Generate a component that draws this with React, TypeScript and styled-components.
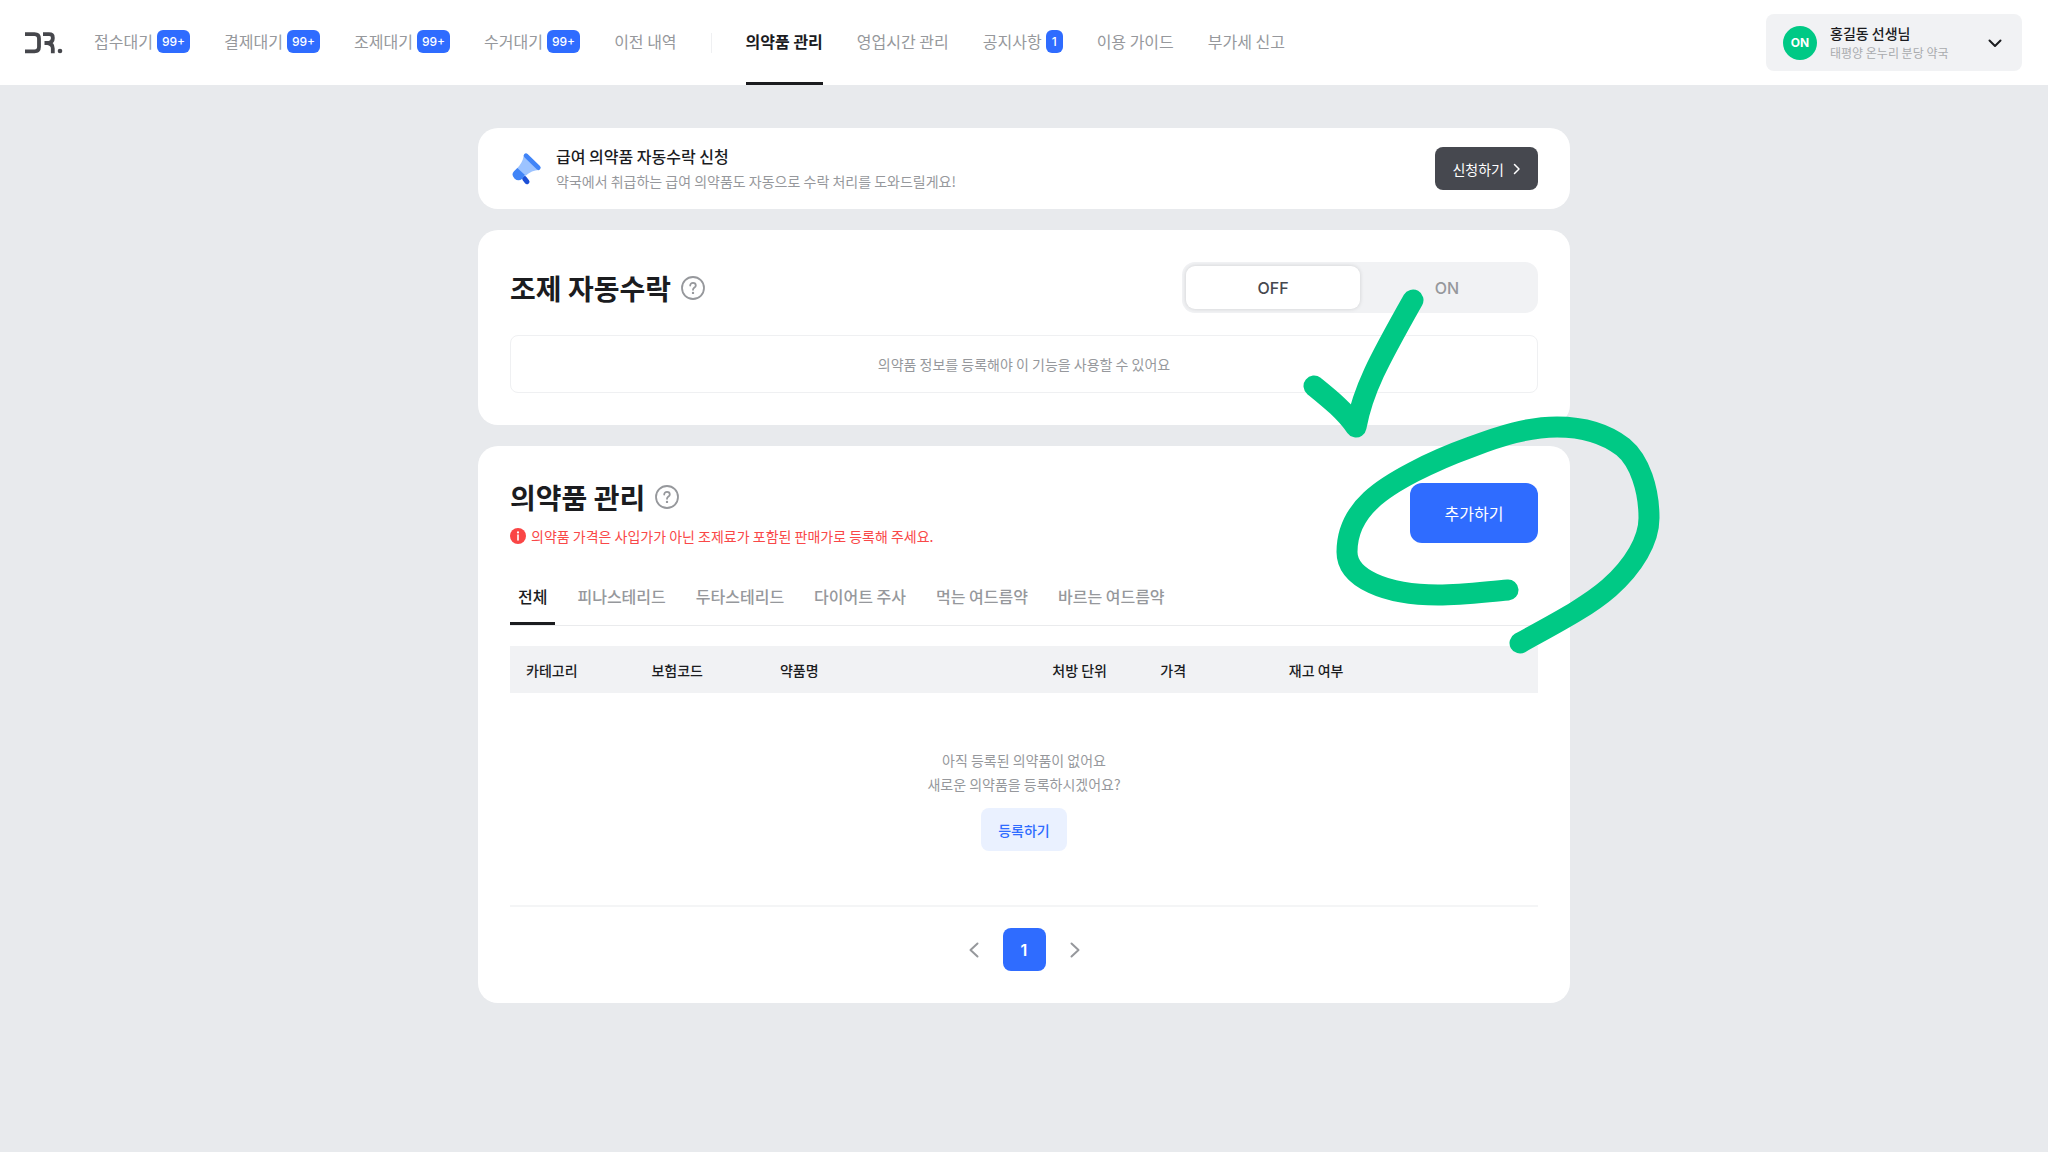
import React, { useState } from "react";
import styled, { createGlobalStyle } from "styled-components";

const latin = `Inter, "Noto Sans CJK KR", sans-serif`;

const GlobalStyle = createGlobalStyle`
  *, *::before, *::after { box-sizing: border-box; }
  body {
    margin: 0;
    background: #e8eaed;
    color: #1b1c1f;
    font-family: "Noto Sans CJK KR", sans-serif;
    font-size: 14px;
    line-height: 24px;
  }
  button { font: inherit; color: inherit; border: 0; padding: 0; background: none; cursor: pointer; }
  h1, h2, p { margin: 0; }
`;

const Header = styled.header`
  display: flex;
  align-items: center;
  height: 85px;
  padding: 0 26px 0 25px;
  background: #ffffff;
`;

const Logo = styled.a`
  display: flex;
  margin-right: 31px;
`;

const Nav = styled.nav`
  display: flex;
  align-items: stretch;
  gap: 34px;
  height: 100%;
`;

const NavLink = styled.a<{ $active?: boolean }>`
  display: flex;
  align-items: center;
  gap: 4px;
  border-bottom: 3px solid ${(p) => (p.$active ? "#1b1c1f" : "transparent")};
  color: ${(p) => (p.$active ? "#1b1c1f" : "#96989c")};
  font-size: 16px;
  font-weight: ${(p) => (p.$active ? 700 : 400)};
  text-decoration: none;
  white-space: nowrap;
`;

const Badge = styled.span`
  min-width: 17px;
  padding: 0 5px;
  border-radius: 6px;
  background: #2f6cff;
  color: #ffffff;
  font-family: ${latin};
  font-size: 12px;
  font-weight: 500;
  line-height: 23px;
  text-align: center;
`;

const NavDivider = styled.span`
  align-self: center;
  width: 1px;
  height: 20px;
  background: #eff0f2;
`;

const UserMenu = styled.button`
  display: flex;
  align-items: center;
  gap: 13px;
  width: 256px;
  height: 57px;
  margin-left: auto;
  padding: 0 17px;
  border-radius: 8px;
  background: #f1f2f4;
  text-align: left;
`;

const Status = styled.span`
  display: grid;
  place-items: center;
  width: 34px;
  height: 34px;
  border-radius: 50%;
  background: #00c985;
  color: #ffffff;
  font-family: ${latin};
  font-size: 12px;
  font-weight: 700;
`;

const UserText = styled.span`
  display: flex;
  flex: 1;
  flex-direction: column;
`;

const UserName = styled.span`
  font-weight: 500;
  line-height: 20px;
`;

const UserPlace = styled.span`
  color: #a9abae;
  font-size: 12px;
  line-height: 20px;
`;

const Main = styled.main`
  position: relative;
  display: flex;
  flex-direction: column;
  gap: 21px;
  max-width: 1092px;
  margin: 0 auto;
  padding: 43px 0;
`;

const Card = styled.section<{ $compact?: boolean }>`
  padding: ${(p) => (p.$compact ? "16px 32px" : "32px")};
  border-radius: 20px;
  background: #ffffff;
`;

const Row = styled.div`
  display: flex;
  align-items: center;
  justify-content: space-between;
`;

const Notice = styled.div`
  display: flex;
  align-items: center;
  gap: 14px;
`;

const NoticeTitle = styled.h2`
  font-size: 16px;
  font-weight: 500;
  line-height: 25px;
`;

const Muted = styled.p`
  color: #96989c;
`;

const ApplyButton = styled.button`
  display: flex;
  align-items: center;
  gap: 9px;
  height: 43px;
  padding: 0 17px;
  border-radius: 8px;
  background: #46484f;
  color: #ffffff;
`;

const TitleRow = styled.div`
  display: flex;
  align-items: center;
  gap: 10px;
`;

const Title = styled.h1`
  font-size: 28px;
  font-weight: 700;
  line-height: 38px;
`;

const IconButton = styled.button<{ $size: number }>`
  display: grid;
  place-items: center;
  width: ${(p) => p.$size}px;
  height: ${(p) => p.$size}px;
`;

const Toggle = styled.div`
  display: grid;
  grid-template-columns: 1fr 1fr;
  width: 356px;
  height: 51px;
  padding: 4px;
  border-radius: 13px;
  background: #f1f2f4;
`;

const ToggleOption = styled.label`
  display: grid;
  place-items: center;
  border-radius: 9px;
  color: #96989c;
  font-family: ${latin};
  font-size: 16px;
  font-weight: 500;
  cursor: pointer;

  &:has(input:checked) {
    background: #ffffff;
    color: #46484f;
    box-shadow: 0 0 4px rgba(0, 0, 0, 0.14);
  }
`;

const HiddenRadio = styled.input`
  position: absolute;
  opacity: 0;
  pointer-events: none;
`;

const InfoBox = styled.p`
  margin-top: 22px;
  padding: 16px;
  border: 1px solid #eff0f2;
  border-radius: 8px;
  color: #96989c;
  text-align: center;
`;

const Warning = styled.p`
  display: flex;
  align-items: center;
  gap: 5px;
  margin-top: 8px;
  color: #f94848;
`;

const AddButton = styled.button`
  width: 128px;
  height: 60px;
  border-radius: 12px;
  background: #2f6cff;
  color: #ffffff;
  font-size: 16px;
`;

const Tabs = styled.div`
  display: flex;
  gap: 14px;
  margin: 21px 0 20px;
  border-bottom: 1px solid #eaebed;
`;

const Tab = styled.button<{ $active: boolean }>`
  height: 56px;
  padding: 0 8px;
  border-bottom: 3px solid ${(p) => (p.$active ? "#1b1c1f" : "transparent")};
  color: ${(p) => (p.$active ? "#1b1c1f" : "#96989c")};
  font-size: 16px;
  font-weight: 500;
`;

const Table = styled.table`
  width: 100%;
  border-collapse: collapse;
  table-layout: fixed;
`;

const HeadCell = styled.th<{ $width?: string }>`
  width: ${(p) => p.$width ?? "auto"};
  height: 47px;
  padding: 0 16px;
  background: #f1f2f4;
  font-weight: 500;
  text-align: left;
`;

const EmptyCell = styled.td`
  padding: 55px 0 54px;
  border-bottom: 2px solid #f4f5f6;
  text-align: center;
`;

const RegisterButton = styled.button`
  height: 43px;
  margin-top: 12px;
  padding: 0 17px;
  border-radius: 8px;
  background: #eaf1ff;
  color: #2f6cff;
  font-weight: 500;
`;

const Pagination = styled.nav`
  display: flex;
  align-items: center;
  justify-content: center;
  gap: 12px;
  padding-top: 21px;
`;

const PageButton = styled.button`
  width: 43px;
  height: 43px;
  border-radius: 8px;
  background: #2f6cff;
  color: #ffffff;
  font-family: ${latin};
  font-size: 16px;
  font-weight: 600;
`;

const Marks = styled.svg`
  position: absolute;
  top: 195px;
  right: -100px;
  pointer-events: none;
`;

const Chevron = ({ d, w, h, color, stroke = 2 }: { d: string; w: number; h: number; color: string; stroke?: number }) => (
  <svg width={w} height={h} viewBox={`0 0 ${w} ${h}`} fill="none" stroke={color} strokeWidth={stroke} strokeLinecap="round" strokeLinejoin="round" aria-hidden="true">
    <path d={d} />
  </svg>
);

const HelpButton = () => (
  <IconButton $size={24} type="button" aria-label="도움말">
    <svg width="24" height="24" viewBox="0 0 24 24" fill="none" stroke="#96989c" strokeWidth="1.8" strokeLinecap="round" aria-hidden="true">
      <circle cx="12" cy="12" r="11" />
      <path d="M9.2 9.6C9.2 7.9 10.4 6.9 12 6.9s2.8 1 2.8 2.5c0 2.1-2.8 2.2-2.8 4.4" />
      <circle cx="12" cy="16.9" r="1.2" fill="#96989c" stroke="none" />
    </svg>
  </IconButton>
);

const waiting = ["접수대기", "결제대기", "조제대기", "수거대기"];

const categories = ["전체", "피나스테리드", "두타스테리드", "다이어트 주사", "먹는 여드름약", "바르는 여드름약"];

const columns: { label: string; width?: string }[] = [
  { label: "카테고리", width: "12.2%" },
  { label: "보험코드", width: "12.5%" },
  { label: "약품명", width: "26.5%" },
  { label: "처방 단위", width: "10.5%" },
  { label: "가격", width: "12.5%" },
  { label: "재고 여부" },
];

export default function App() {
  const [category, setCategory] = useState(categories[0]);

  return (
    <>
      <GlobalStyle />
      <Header>
        <Logo href="#" aria-label="DR.">
          <svg width="38" height="22" viewBox="0 0 38 22" fill="none" stroke="#46474c" strokeWidth="3.8" aria-hidden="true">
            <path d="M0 2.2H9.5Q14 2.2 14 6.7V14.8Q14 19.3 9.5 19.3H0" />
            <path d="M18 2.2H24Q27.8 2.2 27.8 5.4V6.4Q27.8 9.8 23.6 11H19.5M19.5 11H22.6Q27.8 11.8 27.8 16.4V21.2" />
            <circle cx="35" cy="19" r="2.3" fill="#46474c" stroke="none" />
          </svg>
        </Logo>
        <Nav aria-label="주 메뉴">
          {waiting.map((label) => (
            <NavLink key={label} href="#">
              {label}
              <Badge>99+</Badge>
            </NavLink>
          ))}
          <NavLink href="#">이전 내역</NavLink>
          <NavDivider />
          <NavLink href="#" $active aria-current="page">의약품 관리</NavLink>
          <NavLink href="#">영업시간 관리</NavLink>
          <NavLink href="#">
            공지사항
            <Badge>1</Badge>
          </NavLink>
          <NavLink href="#">이용 가이드</NavLink>
          <NavLink href="#">부가세 신고</NavLink>
        </Nav>
        <UserMenu type="button">
          <Status>ON</Status>
          <UserText>
            <UserName>홍길동 선생님</UserName>
            <UserPlace>태평양 온누리 분당 약국</UserPlace>
          </UserText>
          <Chevron w={20} h={20} d="M4.5 7.5 10 13l5.5-5.5" color="#1b1c1f" />
        </UserMenu>
      </Header>

      <Main>
        <Card $compact>
          <Row>
            <Notice>
              <svg width="32" height="34" viewBox="16 20 96 102" aria-hidden="true">
                <path d="M60 100l7 9" stroke="#1c4fd6" strokeWidth="15" strokeLinecap="round" />
                <path d="M57 32L102 74C90 75 74 80 62 92L36 70C48 58 54 48 57 32Z" fill="#9cc3ff" />
                <path d="M38 68L61 89L53 100Q41 110 30 100Q18 88 28 78Z" fill="#4084f7" />
                <path d="M64 31L101 67" stroke="#4084f7" strokeWidth="14" strokeLinecap="round" />
              </svg>
              <div>
                <NoticeTitle>급여 의약품 자동수락 신청</NoticeTitle>
                <Muted>약국에서 취급하는 급여 의약품도 자동으로 수락 처리를 도와드릴게요!</Muted>
              </div>
            </Notice>
            <ApplyButton type="button">
              신청하기
              <Chevron w={8} h={12} d="M1.5 1.5 6 6 1.5 10.5" color="#ffffff" stroke={1.5} />
            </ApplyButton>
          </Row>
        </Card>

        <Card>
          <Row>
            <TitleRow>
              <Title>조제 자동수락</Title>
              <HelpButton />
            </TitleRow>
            <Toggle role="radiogroup" aria-label="조제 자동수락">
              <ToggleOption>
                <HiddenRadio type="radio" name="auto" value="off" defaultChecked />
                OFF
              </ToggleOption>
              <ToggleOption>
                <HiddenRadio type="radio" name="auto" value="on" />
                ON
              </ToggleOption>
            </Toggle>
          </Row>
          <InfoBox>의약품 정보를 등록해야 이 기능을 사용할 수 있어요</InfoBox>
        </Card>

        <Card>
          <Row>
            <div>
              <TitleRow>
                <Title>의약품 관리</Title>
                <HelpButton />
              </TitleRow>
              <Warning>
                <svg width="16" height="16" viewBox="0 0 16 16" aria-hidden="true">
                  <circle cx="8" cy="8" r="8" fill="#fa4545" />
                  <circle cx="8" cy="4.4" r="1.1" fill="#fff" />
                  <path d="M8 7v5" stroke="#fff" strokeWidth="1.6" strokeLinecap="round" />
                </svg>
                의약품 가격은 사입가가 아닌 조제료가 포함된 판매가로 등록해 주세요.
              </Warning>
            </div>
            <AddButton type="button">추가하기</AddButton>
          </Row>

          <Tabs role="tablist">
            {categories.map((name) => (
              <Tab key={name} type="button" role="tab" aria-selected={name === category} $active={name === category} onClick={() => setCategory(name)}>
                {name}
              </Tab>
            ))}
          </Tabs>

          <Table>
            <thead>
              <tr>
                {columns.map((c) => (
                  <HeadCell key={c.label} $width={c.width} scope="col">{c.label}</HeadCell>
                ))}
              </tr>
            </thead>
            <tbody>
              <tr>
                <EmptyCell colSpan={columns.length}>
                  <Muted>아직 등록된 의약품이 없어요</Muted>
                  <Muted>새로운 의약품을 등록하시겠어요?</Muted>
                  <RegisterButton type="button">등록하기</RegisterButton>
                </EmptyCell>
              </tr>
            </tbody>
          </Table>

          <Pagination aria-label="페이지">
            <IconButton $size={34} type="button" aria-label="이전">
              <Chevron w={12} h={18} d="M9.5 2.5 2.5 9l7 6.5" color="#96989c" />
            </IconButton>
            <PageButton type="button" aria-current="page">1</PageButton>
            <IconButton $size={34} type="button" aria-label="다음">
              <Chevron w={12} h={18} d="M2.5 2.5 9.5 9l-7 6.5" color="#96989c" />
            </IconButton>
          </Pagination>
        </Card>

        <Marks width="370" height="380" viewBox="1300 280 370 380" fill="none" stroke="#00c985" strokeWidth="21" strokeLinecap="round" strokeLinejoin="round" aria-hidden="true">
          <path d="M1314 386C1330 399 1345 411 1356 427C1363 390 1378 362 1413 300" />
          <path d="M1508 590C1484 592 1462 595 1438 595C1385 595 1347 578 1347 552C1347 530 1357 513 1371 500C1390 482 1432 461 1471 447C1500 436 1528 427 1557 427C1584 427 1606 434 1623 447C1640 461 1649 490 1649 518C1649 540 1634 566 1609 588C1586 608 1552 625 1520 643" />
        </Marks>
      </Main>
    </>
  );
}
